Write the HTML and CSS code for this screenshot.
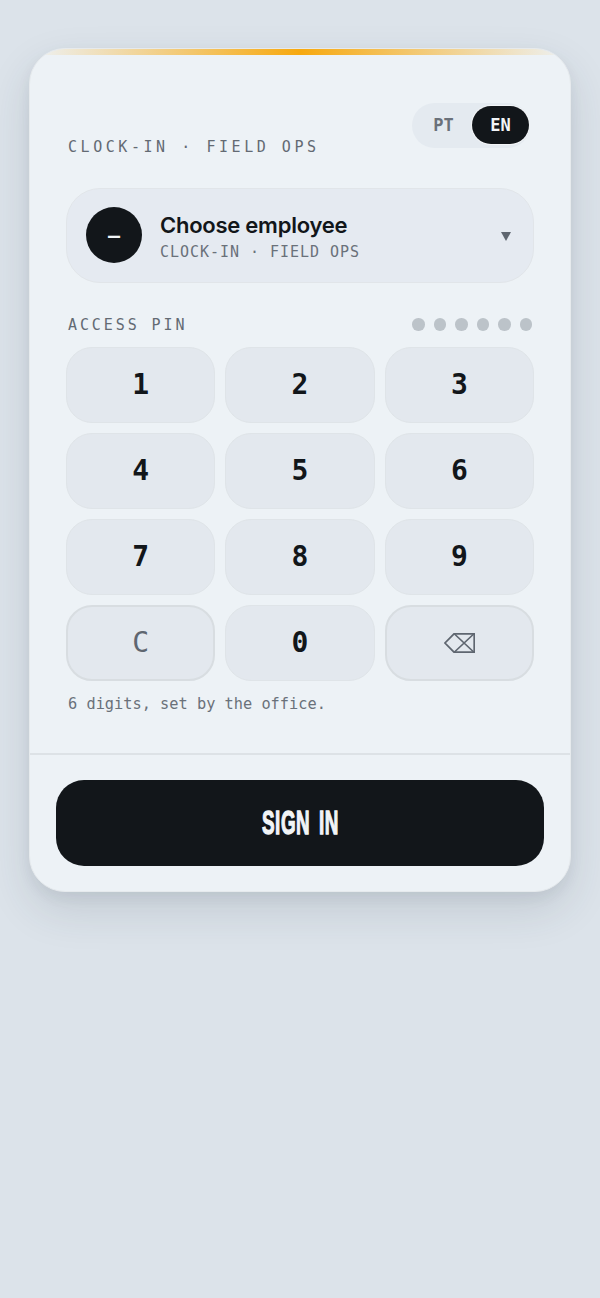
FILE: index.html
```html
<!DOCTYPE html>
<html lang="en">
<head>
  <meta charset="UTF-8">
  <meta name="viewport" content="width=device-width, initial-scale=1.0">
  <title>Clock-in</title>
  <link rel="stylesheet" href="styles.css">
</head>
<body>
  <div class="card">
    <div class="accent"></div>

    <div class="card-body">
      <div class="top-row">
        <span class="eyebrow">CLOCK-IN · FIELD OPS</span>
        <div class="lang">
          <button class="lang-btn">PT</button>
          <button class="lang-btn active">EN</button>
        </div>
      </div>

      <!-- Employee picker -->
      <div class="picker">
        <div class="avatar">–</div>
        <div class="picker-text">
          <div class="picker-name">Choose employee</div>
          <div class="picker-sub">CLOCK-IN · FIELD OPS</div>
        </div>
        <div class="caret"></div>
      </div>

      <div class="pin-row">
        <span class="pin-label">ACCESS PIN</span>
        <div class="dots">
          <span class="dot"></span>
          <span class="dot"></span>
          <span class="dot"></span>
          <span class="dot"></span>
          <span class="dot"></span>
          <span class="dot"></span>
        </div>
      </div>

      <!-- Keypad -->
      <div class="keypad">
        <button class="key">1</button>
        <button class="key">2</button>
        <button class="key">3</button>
        <button class="key">4</button>
        <button class="key">5</button>
        <button class="key">6</button>
        <button class="key">7</button>
        <button class="key">8</button>
        <button class="key">9</button>
        <button class="key key-alt">C</button>
        <button class="key">0</button>
        <button class="key key-alt">
          <svg class="back-icon" width="31" height="20" viewBox="0 0 31 20" fill="none" stroke="#5f6670" stroke-width="1.7">
            <path d="M10 .8H30.2V19.2H10L1 10Z"/>
            <path d="M10.5 1L29.7 19M29.7 1L10.5 19"/>
          </svg>
        </button>
      </div>

      <p class="hint">6 digits, set by the office.</p>
    </div>

    <div class="card-foot">
      <button class="sign-in"><span>SIGN IN</span></button>
    </div>
  </div>
</body>
</html>
```

FILE: styles.css
```css
* {
  box-sizing: border-box;
}

body {
  margin: 0;
  min-height: 1298px;
  background-color: #dce3ea;
  font-family: "Inter", sans-serif;
  padding: 48px 29px 0;
}

button {
  font-family: inherit;
  cursor: pointer;
}

.card {
  height: 844px;
  background: #edf2f6;
  border: 1px solid #e6eaed;
  border-radius: 36px;
  box-shadow: 0 6px 14px rgba(40, 55, 70, 0.06), 0 18px 44px rgba(40, 55, 70, 0.14);
  overflow: hidden;
}

.accent {
  height: 6px;
  background: linear-gradient(90deg, rgba(245, 168, 15, 0), #f7a90f 50%, rgba(245, 168, 15, 0));
}

.card-body {
  padding: 48px 36px 0;
}

.top-row {
  display: flex;
  justify-content: space-between;
  align-items: flex-start;
  height: 53px;
  margin-bottom: 32px;
}

.eyebrow {
  font-family: "DejaVu Sans Mono", monospace;
  font-size: 15px;
  letter-spacing: 3.55px;
  color: #636a73;
  margin: 35px 0 0 2px;
  line-height: 18px;
}

.lang {
  display: flex;
  align-items: center;
  justify-content: flex-end;
  width: 118px;
  height: 45px;
  padding: 1px 1px 2px 0;
  margin-right: 4px;
  background: #e4eaf0;
  border-radius: 23px;
}

.lang-btn {
  border: none;
  background: none;
  width: 57px;
  height: 38px;
  border-radius: 20px;
  font-family: "DejaVu Sans Mono", monospace;
  font-size: 17px;
  font-weight: bold;
  color: #6a717a;
  padding: 0;
}

.lang-btn.active {
  background: #12161a;
  color: #f1f4f7;
  box-shadow: 0 0 0 1px #f3f5f7;
}

.picker {
  display: flex;
  align-items: center;
  height: 95px;
  padding: 0 22px 0 19px;
  background: #e5eaf1;
  border: 1px solid #e1e5e9;
  border-radius: 34px;
}

.avatar {
  width: 56px;
  height: 56px;
  flex: none;
  margin-bottom: 1px;
  border-radius: 50%;
  background: #12161a;
  color: #f1f4f7;
  display: flex;
  align-items: center;
  justify-content: center;
  font-family: "DejaVu Sans Mono", monospace;
  font-weight: bold;
  font-size: 20px;
}

.picker-text {
  flex: 1;
  margin-left: 18px;
  padding-top: 3px;
}

.picker-name {
  font-size: 22px;
  font-weight: 600;
  line-height: 27px;
  color: #12161a;
  letter-spacing: -0.25px;
}

.picker-sub {
  font-family: "DejaVu Sans Mono", monospace;
  font-size: 15px;
  letter-spacing: 0.97px;
  line-height: 20px;
  margin-top: 3px;
  color: #6a717a;
}

.caret {
  width: 0;
  height: 0;
  margin-top: 2px;
  border-left: 5px solid transparent;
  border-right: 5px solid transparent;
  border-top: 9px solid #5f6670;
}

.pin-row {
  display: flex;
  justify-content: space-between;
  align-items: center;
  height: 19px;
  margin-top: 32px;
  margin-bottom: 13px;
}

.pin-label {
  font-family: "DejaVu Sans Mono", monospace;
  font-size: 15px;
  letter-spacing: 2.9px;
  color: #636a73;
  margin-left: 2px;
}

.dots {
  display: flex;
  gap: 9px;
  margin-right: 2px;
}

.dot {
  width: 12.5px;
  height: 12.5px;
  border-radius: 50%;
  background: #bcc3c9;
}

.keypad {
  display: grid;
  grid-template-columns: repeat(3, 1fr);
  grid-auto-rows: 76px;
  gap: 10px;
}

.key {
  background: #e3e8ee;
  border: 1px solid #dfe4e8;
  border-radius: 26px;
  font-family: "DejaVu Sans Mono", monospace;
  font-size: 28px;
  font-weight: bold;
  color: #12161a;
  padding: 0 0 1px;
  display: flex;
  align-items: center;
  justify-content: center;
}

.key-alt {
  border: 2px solid #d8dde1;
  font-weight: normal;
  color: #5f6670;
}

.hint {
  margin: 13px 0 0 2px;
  font-family: "DejaVu Sans Mono", monospace;
  font-size: 15.3px;
  line-height: 20px;
  color: #6a717a;
}

.card-foot {
  margin-top: 39px;
  border-top: 2px solid #dde2e6;
  padding: 25px 26px 0;
}

.sign-in {
  width: 100%;
  height: 85.5px;
  border: none;
  border-radius: 28px;
  background: #12161a;
  color: #f1f4f7;
  font-family: "Liberation Sans", sans-serif;
  font-size: 33px;
  font-weight: bold;
}

/* no condensed face installed, so squeeze the bold one */
.sign-in span {
  display: inline-block;
  transform: scaleX(0.57);
  letter-spacing: 1px;
  word-spacing: 5px;
  -webkit-text-stroke: 1.3px #f1f4f7;
}
```
